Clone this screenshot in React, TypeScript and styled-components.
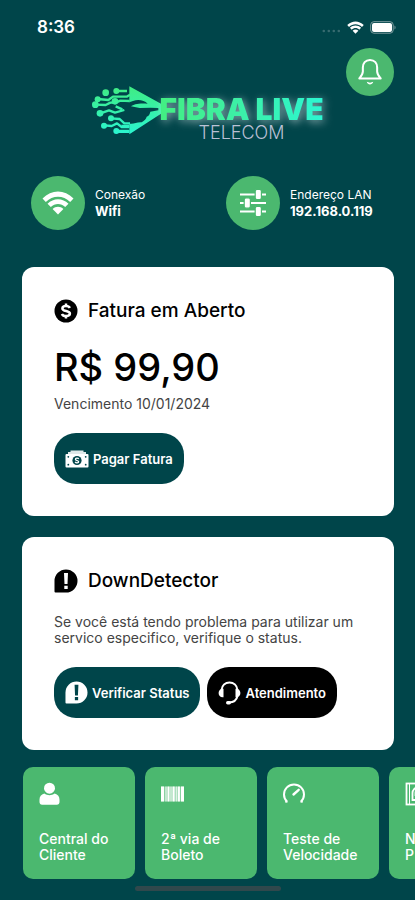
import React from "react";
import styled, { createGlobalStyle } from "styled-components";

const color = {
  page: "#00454a",
  green: "#4bb86f",
  white: "#ffffff",
  black: "#000000",
  muted: "#444444",
};

const GlobalStyle = createGlobalStyle`
  *, *::before, *::after { box-sizing: border-box; }
  body {
    margin: 0;
    background: ${color.page};
    color: ${color.white};
    font-family: Inter, "Liberation Sans", sans-serif;
    overflow-x: hidden;
  }
  h1, h2, p { margin: 0; }
  svg { display: block; flex: none; }
`;

const Screen = styled.main`
  display: flex;
  flex-direction: column;
  min-height: 100vh;
  overflow: hidden;
  background: ${color.page};
`;

const StatusBar = styled.header`
  display: flex;
  align-items: center;
  justify-content: space-between;
  height: 48px;
  padding: 6px 19px 0 37px;
`;

const Clock = styled.time`
  font-size: 17px;
  line-height: 20px;
  font-weight: 600;
`;

const SystemIcons = styled.div`
  display: flex;
  align-items: center;
  gap: 6px;
`;

const TopActions = styled.div`
  display: flex;
  justify-content: flex-end;
  height: 37px;
  padding-right: 21px;
`;

const BellButton = styled.button`
  display: grid;
  place-items: center;
  flex: none;
  width: 48px;
  height: 48px;
  padding: 0;
  border: 0;
  border-radius: 50%;
  background: ${color.green};
  color: ${color.white};
`;

const Brand = styled.h1`
  display: flex;
  justify-content: center;
  height: 54px;
  font-weight: 400;
`;

const BrandWords = styled.span`
  display: flex;
  flex-direction: column;
  align-items: center;
  padding-top: 9px;
  margin-left: -2px;
`;

const BrandName = styled.span`
  font-size: 30px;
  line-height: 30px;
  font-weight: 900;
  white-space: nowrap;
  background: linear-gradient(90deg, #43ee82, #3df0a4 45%, #2cf6d2);
  background-clip: text;
  -webkit-background-clip: text;
  color: transparent;
  filter: drop-shadow(2px 2px 4px rgba(225, 235, 235, 0.6));
`;

const BrandSub = styled.span`
  font-weight: 300;
  font-size: 18px;
  line-height: 18px;
  color: #b9bfd4;
`;

const Network = styled.section`
  display: grid;
  grid-template-columns: 1fr 1fr;
  column-gap: 6px;
  margin-top: 37px;
  padding-left: 31px;
`;

const NetworkItem = styled.div`
  display: flex;
  align-items: center;
  gap: 10px;
`;

const Disc = styled.span`
  display: grid;
  place-items: center;
  flex: none;
  width: 54px;
  height: 54px;
  border-radius: 50%;
  background: ${color.green};
`;

const NetworkText = styled.p<{ $strong?: boolean }>`
  font-size: ${(p) => (p.$strong ? 13 : 12)}px;
  line-height: 17px;
  font-weight: ${(p) => (p.$strong ? 700 : 400)};
`;

const Card = styled.section`
  margin: 0 21px 21px 22px;
  padding: 32px;
  border-radius: 12px;
  background: ${color.white};
  color: ${color.black};
`;

const Cards = styled.div`
  margin-top: 37px;
`;

const CardHead = styled.div`
  display: flex;
  align-items: center;
  gap: 10px;
`;

const CardTitle = styled.h2`
  font-size: 19px;
  line-height: 24px;
  font-weight: 500;
`;

const Price = styled.p`
  margin-top: 21px;
  font-size: 38px;
  line-height: 46px;
  font-weight: 500;
`;

const Note = styled.p<{ $top: number }>`
  margin-top: ${(p) => p.$top}px;
  color: ${color.muted};
  font-size: 14px;
  line-height: 16px;
`;

const Actions = styled.div<{ $top: number }>`
  display: flex;
  gap: 7px;
  margin-top: ${(p) => p.$top}px;
`;

const Pill = styled.button<{ $dark?: boolean }>`
  display: flex;
  align-items: center;
  gap: 4px;
  height: 51px;
  padding: 0 11px;
  border: 0;
  border-radius: 22px;
  background: ${(p) => (p.$dark ? color.black : color.page)};
  color: ${color.white};
  font-family: inherit;
  font-size: 13px;
  font-weight: 600;
  white-space: nowrap;
`;

const Tiles = styled.nav`
  display: flex;
  gap: 10px;
  margin-top: -4px;
  padding-left: 23px;
  overflow: hidden;
`;

const Tile = styled.a`
  display: flex;
  flex-direction: column;
  justify-content: space-between;
  flex: none;
  width: 112px;
  height: 112px;
  padding: 15px 16px 16px;
  border-radius: 10px;
  background: ${color.green};
  color: ${color.white};
  font-size: 14px;
  line-height: 16px;
  font-weight: 500;
  text-decoration: none;
`;

const HomeBar = styled.div`
  align-self: center;
  width: 146px;
  height: 5px;
  margin-top: 7px;
  border-radius: 3px;
  background: #30484c;
`;

const WifiIcon = ({ width, height }: { width: number; height: number }) => (
  <svg width={width} height={height} viewBox="0 0 32 24" fill="#fff" aria-hidden="true">
    <path d="M0.5 7.5C9.5-1.7 22.5-1.7 31.5 7.5l-3.3 3.4c-7-7-17.4-7-24.4 0z" />
    <path d="M5.5 12.7c6-6 15-6 21 0l-3.3 3.4c-4.1-4-10.3-4-14.4 0z" />
    <path d="M10.6 18c3-3 7.800-3 10.800 0L16 23.600z" />
  </svg>
);

const BatteryIcon = () => (
  <svg width="26" height="13" viewBox="0 0 26 13" aria-hidden="true">
    <rect x="0.700" y="0.700" width="22.500" height="11.500" rx="3.200" fill="none" stroke="#7d9c9f" />
    <rect x="2" y="2" width="20" height="9" rx="2" fill="#fff" />
    <path d="M24.500 4.500v4c1.400-.6 1.400-3.400 0-4z" fill="#7d9c9f" />
  </svg>
);

const SignalDots = () => (
  <svg width="19" height="12" viewBox="0 0 19 12" fill="#376b70" aria-hidden="true">
    <circle cx="1.800" cy="10" r="1.300" />
    <circle cx="6.800" cy="10" r="1.300" />
    <circle cx="11.800" cy="10" r="1.300" />
    <circle cx="16.800" cy="10" r="1.300" />
  </svg>
);

const BellIcon = () => (
  <svg width="26" height="28" viewBox="0 0 28 30" fill="none" stroke="#fff" strokeWidth="2.200" strokeLinejoin="round" aria-hidden="true">
    <path d="M14 2C9 2 6.300 5.600 6.300 10.200v4.300c0 3-1.400 4.500-3.800 7.500h23c-2.400-3-3.800-4.500-3.800-7.500v-4.300C21.700 5.600 19 2 14 2z" />
    <path d="M10.500 25.500c1 4 6 4 7 0l-3.500 1z" fill="#fff" stroke="none" />
  </svg>
);

const SlidersIcon = () => (
  <svg width="28" height="28" viewBox="0 0 28 28" fill="#fff" aria-hidden="true">
    <path d="M1 4.500h26v2H1zM1 13h26v2H1zM1 21.500h26v2H1z" />
    <g stroke={color.green} strokeWidth="1.200">
      <rect x="16.200" y="0.300" width="6.200" height="10.400" rx="2" />
      <rect x="5.200" y="8.800" width="6.200" height="10.400" rx="2" />
      <rect x="16.200" y="17.300" width="6.200" height="10.400" rx="2" />
    </g>
  </svg>
);

const DollarIcon = () => (
  <svg width="24" height="24" viewBox="0 0 24 24" fill="none" aria-hidden="true">
    <circle cx="12" cy="12" r="11.500" fill="#000" />
    <path d="M15.800 8.900C15.200 7.500 13.800 7 12 7c-2 0-3.600.8-3.600 2.400 0 3.500 7.500 1.700 7.500 5.200 0 1.600-1.800 2.500-3.900 2.500s-3.500-.8-4.100-2.200M12 4.500v2.500M12 17v2.600" stroke="#fff" strokeWidth="2.500" />
  </svg>
);

const AlertIcon = ({ fill, mark, size }: { fill: string; mark: string; size: number }) => (
  <svg width={size} height={size} viewBox="0 0 24 24" aria-hidden="true">
    <path d="M12 .5A11.500 11.500 0 1 1 12 23.500H1.500a1 1 0 0 1-1-1V12A11.500 11.500 0 0 1 12 .5z" fill={fill} />
    <path d="M10 4h4l-.5 11h-3zM10.300 16.800h3.400v3.200h-3.400z" fill={mark} />
  </svg>
);

const MoneyIcon = () => (
  <svg width="24" height="18" viewBox="0 0 24 18" aria-hidden="true">
    <path d="M5.500 0.500h13v1.500h2.500v2H3V2h2.500z" fill="#dfe9e9" />
    <rect x="0.500" y="4" width="23" height="13.500" rx="1" fill="#fff" />
    <circle cx="12" cy="10.500" r="4.600" fill={color.page} />
    <path d="M13.800 9c-.8-1.300-3.500-1-3.400.4.1 1.500 3.300.8 3.300 2.300 0 1.400-2.800 1.500-3.600.2" fill="none" stroke="#fff" strokeWidth="1.200" />
    <g fill={color.page}>
      <circle cx="3.300" cy="6.800" r="0.900" />
      <circle cx="20.700" cy="6.800" r="0.900" />
      <circle cx="3.300" cy="14.700" r="0.900" />
      <circle cx="20.700" cy="14.700" r="0.900" />
    </g>
  </svg>
);

const HeadsetIcon = () => (
  <svg width="23" height="24" viewBox="0 0 23 24" fill="none" stroke="#fff" aria-hidden="true">
    <path d="M3.500 9C4 4.500 7.300 1.500 11.500 1.500s7.500 3 8 7.500M19.500 15c-.8 3.800-3.500 6.300-8.500 6.500" strokeWidth="2" />
    <path d="M5.500 7.700v8.600C2.500 16.800.6 14.500.6 12s1.900-4.700 4.900-4.300zM17.500 7.700v8.600c3 .5 4.900-1.800 4.900-4.300s-1.900-4.700-4.900-4.300z" fill="#fff" stroke="none" />
    <rect x="8" y="20" width="5" height="3.400" rx="1.700" fill="#fff" stroke="none" />
  </svg>
);

const PersonIcon = () => (
  <svg width="22" height="24" viewBox="0 0 22 24" fill="#fff" aria-hidden="true">
    <circle cx="10.500" cy="6.200" r="5.500" />
    <path d="M5.300 11.600c3.200 2.300 7.200 2.300 10.400 0 3.200.9 4.800 3.300 4.800 6.100v2.300c0 1.500-1 2.700-2.600 2.700H3.100C1.500 22.700.5 21.500.5 20v-2.300c0-2.800 1.600-5.200 4.800-6.100z" />
  </svg>
);

const BarcodeIcon = () => (
  <svg width="24" height="24" viewBox="0 0 24 24" fill="#fff" aria-hidden="true">
    <path d="M0 4.500h23v15H0z" opacity="0.350" />
    <path d="M0 4.500h3v15H0zM4.500 4.500h1v15h-1zM6.500 4.500h2v15h-2zM9.500 4.500h1v15h-1zM11.500 4.500h2.200v15h-2.200zM14.700 4.500h1v15h-1zM16.700 4.500h2.200v15h-2.200zM20 4.500h3v15h-3z" />
  </svg>
);

const GaugeIcon = () => (
  <svg width="24" height="24" viewBox="0 0 24 24" fill="none" stroke="#fff" strokeWidth="2" aria-hidden="true">
    <path d="M4 19.600A10 10 0 1 1 18 19.600" />
    <path d="M4.500 19.700l-2.300-.3M17.500 19.700l2.300-.3" />
    <path d="M10.500 12.500l5.200-4.700" strokeWidth="2.400" strokeLinecap="round" />
  </svg>
);

const NoteIcon = () => (
  <svg width="24" height="24" viewBox="0 0 24 24" fill="none" stroke="#fff" strokeWidth="1.800" aria-hidden="true">
    <rect x="1.500" y="1.500" width="21" height="21" />
    <path d="M4.500 2v20" strokeWidth="1" />
    <path d="M7.500 18v-7a5.500 5.500 0 0 1 11 0v7zM10.500 14v-3a2.500 2.500 0 0 1 5 0" />
  </svg>
);

const HandLogo = () => (
  <svg width="70" height="50" viewBox="30 28 210 150" aria-hidden="true">
    <defs>
      <linearGradient id="hand" x1="0" y1="0" x2="0" y2="1">
        <stop offset="0" stopColor="#40ec83" />
        <stop offset="1" stopColor="#2bf5d0" />
      </linearGradient>
      <linearGradient id="circuit" gradientUnits="userSpaceOnUse" x1="0" y1="32" x2="0" y2="175">
        <stop offset="0" stopColor="#40ec83" />
        <stop offset="1" stopColor="#2bf5d0" />
      </linearGradient>
    </defs>
    <path
      fill="url(#hand)"
      d="M145 32L240 84V114L145 176V144C160 146 166 139 182 140C190 134 196 130 197 123C204 120 206 116 208 108L232 104V97L208 96L176 97L150 92C158 86 172 82 200 84C190 74 172 70 156 76L145 80Z"
    />
    <g fill="none" stroke="url(#circuit)" strokeWidth="7" strokeLinejoin="round">
      <path d="M106 46H138M50 70L82 73L96 63H137L147 57" />
      <path d="M44 87L74 88L88 81H104L118 75L146 76" />
      <path d="M58 113L84 104L102 111L130 103M104 92L124 101" />
      <path d="M90 128L116 130L130 143H147M70 149L92 151L108 143L122 154H145" />
      <path d="M106 167H145" />
    </g>
    <g fill="url(#circuit)">
      <circle cx="106" cy="46" r="9" />
      <circle cx="74" cy="51" r="10" />
      <circle cx="50" cy="71" r="9" />
      <circle cx="43" cy="87" r="10" />
      <circle cx="102" cy="77" r="10" />
      <circle cx="57" cy="113" r="10" />
      <circle cx="90" cy="128" r="9" />
      <circle cx="69" cy="150" r="9" />
      <circle cx="106" cy="166" r="9" />
    </g>
    <path d="M120 147h25v8h-18zM108 162h37v10h-37z" fill="url(#circuit)" />
  </svg>
);

export default function App() {
  return (
    <>
      <GlobalStyle />
      <Screen>
        <StatusBar>
          <Clock>8:36</Clock>
          <SystemIcons>
            <SignalDots />
            <WifiIcon width={17} height={13} />
            <BatteryIcon />
          </SystemIcons>
        </StatusBar>
        <TopActions>
          <BellButton type="button" aria-label="Notificações">
            <BellIcon />
          </BellButton>
        </TopActions>
        <Brand>
          <HandLogo />
          <BrandWords>
            <BrandName>FIBRA LIVE</BrandName>
            <BrandSub>TELECOM</BrandSub>
          </BrandWords>
        </Brand>
        <Network>
          <NetworkItem>
            <Disc>
              <WifiIcon width={32} height={24} />
            </Disc>
            <div>
              <NetworkText>Conexão</NetworkText>
              <NetworkText $strong>Wifi</NetworkText>
            </div>
          </NetworkItem>
          <NetworkItem>
            <Disc>
              <SlidersIcon />
            </Disc>
            <div>
              <NetworkText>Endereço LAN</NetworkText>
              <NetworkText $strong>192.168.0.119</NetworkText>
            </div>
          </NetworkItem>
        </Network>
        <Cards>
          <Card>
            <CardHead>
              <DollarIcon />
              <CardTitle>Fatura em Aberto</CardTitle>
            </CardHead>
            <Price>R$ 99,90</Price>
            <Note $top={6}>Vencimento 10/01/2024</Note>
            <Actions $top={21}>
              <Pill type="button">
                <MoneyIcon />
                Pagar Fatura
              </Pill>
            </Actions>
          </Card>
          <Card>
            <CardHead>
              <AlertIcon fill="#000" mark="#fff" size={24} />
              <CardTitle>DownDetector</CardTitle>
            </CardHead>
            <Note $top={21}>
              Se você está tendo problema para utilizar um servico especifico, verifique o status.
            </Note>
            <Actions $top={21}>
              <Pill type="button">
                <AlertIcon fill="#fff" mark={color.page} size={23} />
                Verificar Status
              </Pill>
              <Pill type="button" $dark>
                <HeadsetIcon />
                Atendimento
              </Pill>
            </Actions>
          </Card>
        </Cards>
        <Tiles>
          <Tile href="#central">
            <PersonIcon />
            Central do Cliente
          </Tile>
          <Tile href="#boleto">
            <BarcodeIcon />
            2ª via de Boleto
          </Tile>
          <Tile href="#teste">
            <GaugeIcon />
            Teste de Velocidade
          </Tile>
          <Tile href="#notas">
            <NoteIcon />
            <span>
              N
              <br />
              P
            </span>
          </Tile>
        </Tiles>
        <HomeBar />
      </Screen>
    </>
  );
}
